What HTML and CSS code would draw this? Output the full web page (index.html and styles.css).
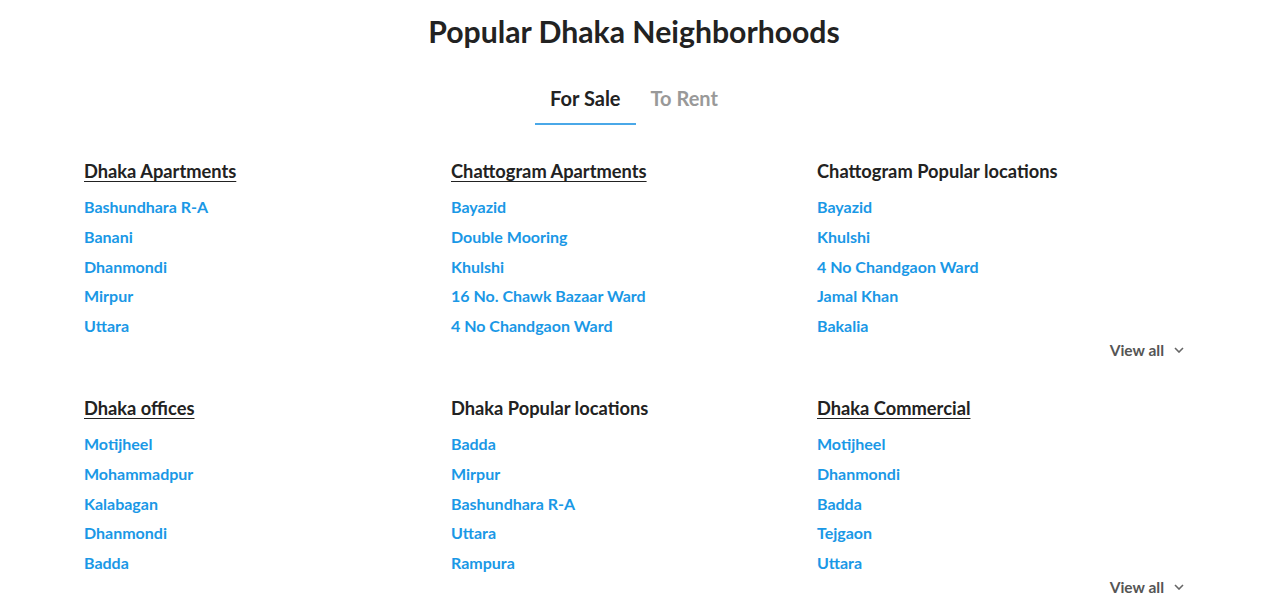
FILE: index.html
```html
<html>
<head>
<title>Popular Dhaka Neighborhoods</title>
<link rel="stylesheet" href="styles.css">
</head>
<body>
<div class="page">
	<h1 class="title">Popular Dhaka Neighborhoods</h1>
	<div class="tabs">
		<div class="tab active">For Sale</div>
		<div class="tab">To Rent</div>
	</div>

	<div class="group">
		<div class="col">
			<a class="head link-head" href="#">Dhaka Apartments</a>
			<ul>
				<li><a href="#">Bashundhara R-A</a></li>
				<li><a href="#">Banani</a></li>
				<li><a href="#">Dhanmondi</a></li>
				<li><a href="#">Mirpur</a></li>
				<li><a href="#">Uttara</a></li>
			</ul>
		</div>
		<div class="col">
			<a class="head link-head" href="#">Chattogram Apartments</a>
			<ul>
				<li><a href="#">Bayazid</a></li>
				<li><a href="#">Double Mooring</a></li>
				<li><a href="#">Khulshi</a></li>
				<li><a href="#">16 No. Chawk Bazaar Ward</a></li>
				<li><a href="#">4 No Chandgaon Ward</a></li>
			</ul>
		</div>
		<div class="col">
			<div class="head">Chattogram Popular locations</div>
			<ul>
				<li><a href="#">Bayazid</a></li>
				<li><a href="#">Khulshi</a></li>
				<li><a href="#">4 No Chandgaon Ward</a></li>
				<li><a href="#">Jamal Khan</a></li>
				<li><a href="#">Bakalia</a></li>
			</ul>
		</div>
	</div>
	<div class="more">
		<span>View all</span>
		<svg width="10" height="6" viewBox="0 0 10 6"><path d="M1 1l4 4 4-4" fill="none" stroke="#666" stroke-width="1.6"/></svg>
	</div>

	<div class="group">
		<div class="col">
			<a class="head link-head" href="#">Dhaka offices</a>
			<ul>
				<li><a href="#">Motijheel</a></li>
				<li><a href="#">Mohammadpur</a></li>
				<li><a href="#">Kalabagan</a></li>
				<li><a href="#">Dhanmondi</a></li>
				<li><a href="#">Badda</a></li>
			</ul>
		</div>
		<div class="col">
			<div class="head">Dhaka Popular locations</div>
			<ul>
				<li><a href="#">Badda</a></li>
				<li><a href="#">Mirpur</a></li>
				<li><a href="#">Bashundhara R-A</a></li>
				<li><a href="#">Uttara</a></li>
				<li><a href="#">Rampura</a></li>
			</ul>
		</div>
		<div class="col">
			<a class="head link-head" href="#">Dhaka Commercial</a>
			<ul>
				<li><a href="#">Motijheel</a></li>
				<li><a href="#">Dhanmondi</a></li>
				<li><a href="#">Badda</a></li>
				<li><a href="#">Tejgaon</a></li>
				<li><a href="#">Uttara</a></li>
			</ul>
		</div>
	</div>
	<div class="more">
		<span>View all</span>
		<svg width="10" height="6" viewBox="0 0 10 6"><path d="M1 1l4 4 4-4" fill="none" stroke="#666" stroke-width="1.6"/></svg>
	</div>
</div>
</body>
</html>
```
FILE: styles.css
```css
body { margin:0; background:#fff; font-family:Lato, "Open Sans", sans-serif; color:#222; }
.page { width:1100px; margin-left:84px; padding-top:13px; }
.title { margin:0; text-align:center; font-size:30.2px; font-weight:bold; line-height:36px; color:#222; }
.tabs { display:flex; justify-content:center; margin-top:36px; }
.tab { font-size:20px; font-weight:bold; line-height:26px; padding:0 15px 12px 15px; color:#999; border-bottom:2px solid transparent; }
.tab.active { color:#222; border-bottom-color:#4aa8e8; }
.group { display:grid; grid-template-columns:367px 366px 367px; margin-top:34px; }
.group + .more + .group { margin-top:36px; }
.head { display:inline-block; font-size:18.3px; font-weight:bold; line-height:24px; color:#222; }
.link-head { text-decoration:underline; text-underline-offset:3px; }
ul { list-style:none; margin:14px 0 0 0; padding:0; }
li { font-size:16px; font-weight:bold; line-height:20px; margin-bottom:9.8px; }
li a { color:#1a98e6; text-decoration:none; }
.more { display:flex; justify-content:flex-end; align-items:center; gap:10px; margin-top:-6px; font-size:15.5px; font-weight:bold; color:#555; line-height:20px; }
.more svg { margin-top:1px; }
```
